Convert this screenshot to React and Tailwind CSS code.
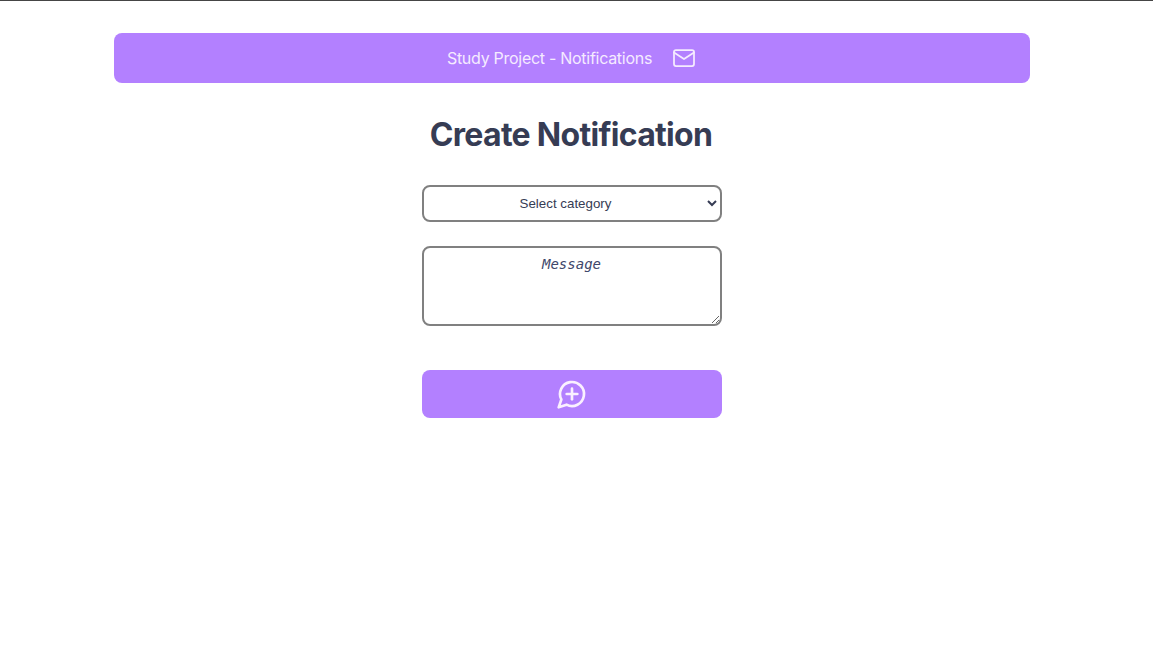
import React from "react";

function MailIcon() {
  return (
    <svg width="24" height="24" viewBox="0 0 24 24" fill="none" stroke="currentColor" strokeWidth="1.75" strokeLinecap="round" strokeLinejoin="round">
      <rect x="2" y="4" width="20" height="16" rx="2" />
      <path d="M22 6.5 12 13 2 6.5" />
    </svg>
  );
}

function MessagePlusIcon() {
  return (
    <svg width="32" height="32" viewBox="0 0 24 24" fill="none" stroke="currentColor" strokeWidth="2" strokeLinecap="round" strokeLinejoin="round">
      <path d="M7.9 20A9 9 0 1 0 4 16.1L2 22Z" />
      <path d="M8 12h8" />
      <path d="M12 8v8" />
    </svg>
  );
}

export default function App() {
  return (
    <div className="min-h-screen border-t border-[#454545] bg-white pr-[9px] pt-8 font-['Inter',sans-serif] text-[#363c54]">
      <header className="mx-auto flex h-[50px] w-[916px] items-center justify-center gap-5 rounded-lg bg-[#b380ff] pr-px text-[#f5ebff]">
        <span className="text-base tracking-[-0.28px]">Study Project - Notifications</span>
        <MailIcon />
      </header>
      <main className="mx-auto flex w-[300px] flex-col">
        <h1 className="mt-8 whitespace-nowrap pr-0.5 text-center text-[32px] font-bold leading-10 tracking-[-0.7px]">Create Notification</h1>
        <select className="mt-[30px] h-[37px] w-full rounded-lg border-2 border-[#808080] bg-white pr-px text-center font-['Liberation_Sans',sans-serif] text-[13.333px] text-[#363c54]">
          <option>Select category</option>
        </select>
        <textarea
          placeholder="Message"
          className="mt-6 h-20 w-full resize rounded-lg border-2 border-[#808080] bg-white pb-2 pl-2 pr-[9px] pt-1.5 text-center font-['DejaVu_Sans_Mono',monospace] text-sm italic leading-5 placeholder:text-[#40476a]"
        />
        <button className="mt-11 flex h-12 w-full items-center justify-center rounded-lg bg-[#b380ff] text-[#faf0ff]">
          <MessagePlusIcon />
        </button>
      </main>
    </div>
  );
}
